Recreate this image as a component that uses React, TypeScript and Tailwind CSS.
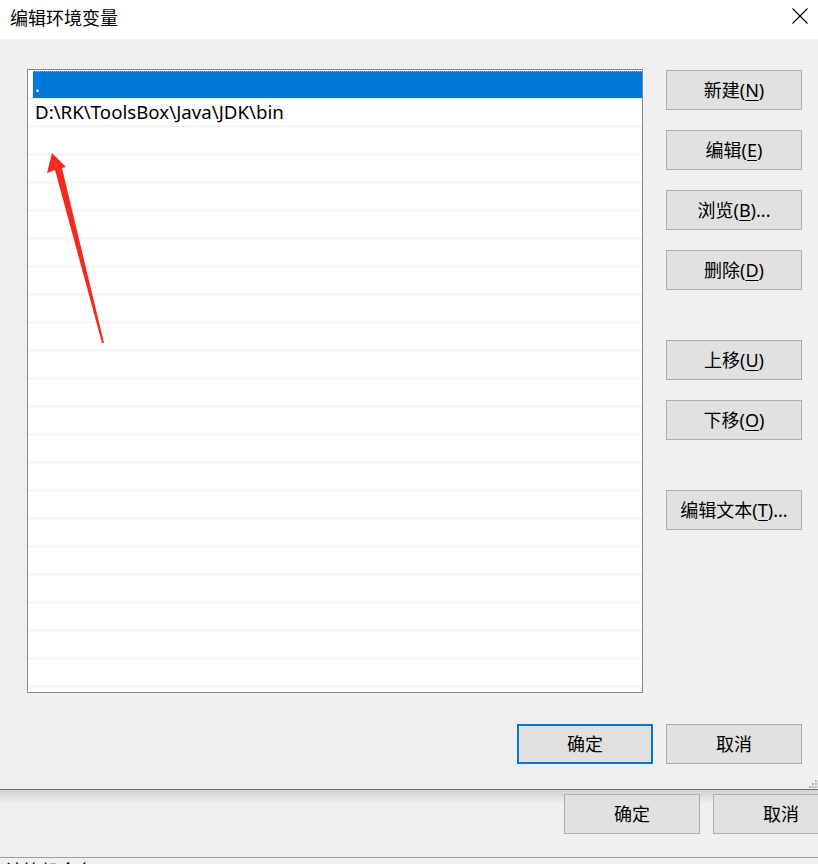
import type { ReactNode } from 'react'

const font = { fontFamily: '"Noto Sans", "Noto Sans CJK SC", sans-serif' }

type Btn = { label: string; key?: string; tail?: string; gap?: boolean }

const sideButtons: Btn[] = [
  { label: '新建', key: 'N' },
  { label: '编辑', key: 'E' },
  { label: '浏览', key: 'B', tail: '...' },
  { label: '删除', key: 'D' },
  { label: '上移', key: 'U', gap: true },
  { label: '下移', key: 'O' },
  { label: '编辑文本', key: 'T', tail: '...', gap: true },
]

function WinButton({ children, primary, className = '' }: { children: ReactNode; primary?: boolean; className?: string }) {
  return (
    <div
      className={
        'w-[136px] h-[40px] shrink-0 flex items-center justify-center bg-[#e1e1e1] text-[18px] text-black ' +
        (primary ? 'border-2 border-[#0078d7] ' : 'border border-[#adadad] ') +
        className
      }
    >
      {children}
    </div>
  )
}

function Label({ b }: { b: Btn }) {
  return (
    <span className="leading-none">
      {b.label}(<u className="underline underline-offset-[3px] decoration-1">{b.key}</u>){b.tail}
    </span>
  )
}

export default function App() {
  const rows = Array.from({ length: 23 })

  return (
    <div className="relative w-[818px] h-[864px] overflow-hidden bg-[#f0f0f0]" style={font}>
      {/* title bar */}
      <div className="h-[39px] bg-white flex items-center justify-between pl-[10px] pr-[10px]">
        <span className="text-[18px] text-black leading-none -mt-[4px]">编辑环境变量</span>
        <svg width="16" height="16" viewBox="0 0 16 16" className="-mt-[7px]">
          <path d="M0.5 0.5 L15.5 15.5 M15.5 0.5 L0.5 15.5" stroke="#000" strokeWidth="1.1" />
        </svg>
      </div>

      {/* dialog body */}
      <div className="relative h-[751px] bg-[#f0f0f0] border-b border-[#6d6d6d]">
        <div className="flex pl-[27px] pt-[30px]">
          <div className="w-[616px] h-[624px] border border-[#828790] bg-white overflow-hidden pt-px">
            {rows.map((_, i) => (
              <div key={i} className="h-[28px] border-b border-[#ececec] flex">
                {i === 0 ? (
                  <div className="ml-[5px] flex-1 bg-[#0078d7] border-t border-dotted border-[#e0a060] flex items-center pl-[2px] text-white text-[18px]">
                    .
                  </div>
                ) : (
                  <div className="flex-1 flex items-center pl-[7px] text-[18.7px] text-black">
                    {i === 1 ? 'D:\\RK\\ToolsBox\\Java\\JDK\\bin' : ''}
                  </div>
                )}
              </div>
            ))}
          </div>

          <div className="ml-[23px] mt-px flex flex-col">
            {sideButtons.map((b, i) => (
              <WinButton key={b.label} className={i === 0 ? '' : b.gap ? 'mt-[50px]' : 'mt-[20px]'}>
                <Label b={b} />
              </WinButton>
            ))}
          </div>
        </div>

        <div className="flex justify-end gap-[13px] pr-[16px] mt-[31px]">
          <WinButton primary>确定</WinButton>
          <WinButton>取消</WinButton>
        </div>

        {/* resize grip */}
        <svg width="8" height="8" viewBox="0 0 8 8" className="absolute right-[1px] bottom-[1px]">
          <rect x="6" y="0" width="2" height="2" fill="#b4b4b4" />
          <rect x="3" y="3" width="2" height="2" fill="#b4b4b4" />
          <rect x="6" y="3" width="2" height="2" fill="#b4b4b4" />
          <rect x="0" y="6" width="2" height="2" fill="#b4b4b4" />
          <rect x="3" y="6" width="2" height="2" fill="#b4b4b4" />
          <rect x="6" y="6" width="2" height="2" fill="#b4b4b4" />
        </svg>
      </div>

      {/* window behind */}
      <div className="relative h-[67px]">
        <div className="absolute inset-x-0 top-0 h-[14px] bg-gradient-to-b from-[#d2d2d2] to-[#f0f0f0]" />
        <div className="relative flex gap-[13px] pl-[564px] pt-[4px]">
          <WinButton>确定</WinButton>
          <WinButton>取消</WinButton>
        </div>
      </div>
      <div className="border-t border-[#a0a0a0] bg-[#f0f0f0] h-[20px] pl-[5px] pt-px text-[18px] leading-[24px] text-black whitespace-nowrap">
        计算机全名(F):&nbsp;&nbsp;&nbsp;&nbsp;&nbsp;&nbsp;&nbsp;&nbsp;&nbsp;&nbsp;&nbsp;&nbsp;&nbsp;&nbsp;&nbsp;&nbsp;&nbsp;&nbsp;&nbsp;&nbsp;&nbsp;&nbsp;l&nbsp;&nbsp;&nbsp;&nbsp;&nbsp;&nbsp;&nbsp;&nbsp;&nbsp;&nbsp;l&nbsp;&nbsp;&nbsp;&nbsp;&nbsp;&nbsp;&nbsp;&nbsp;&nbsp;&nbsp;&nbsp;&nbsp;&nbsp;&nbsp;l
      </div>

      {/* annotation arrow */}
      <svg width="818" height="864" className="absolute left-0 top-0 pointer-events-none">
        <polygon points="52,153 66,167 62,168 104,343 102,343 55,170 47,173" fill="#f52a1f" />
      </svg>
    </div>
  )
}
